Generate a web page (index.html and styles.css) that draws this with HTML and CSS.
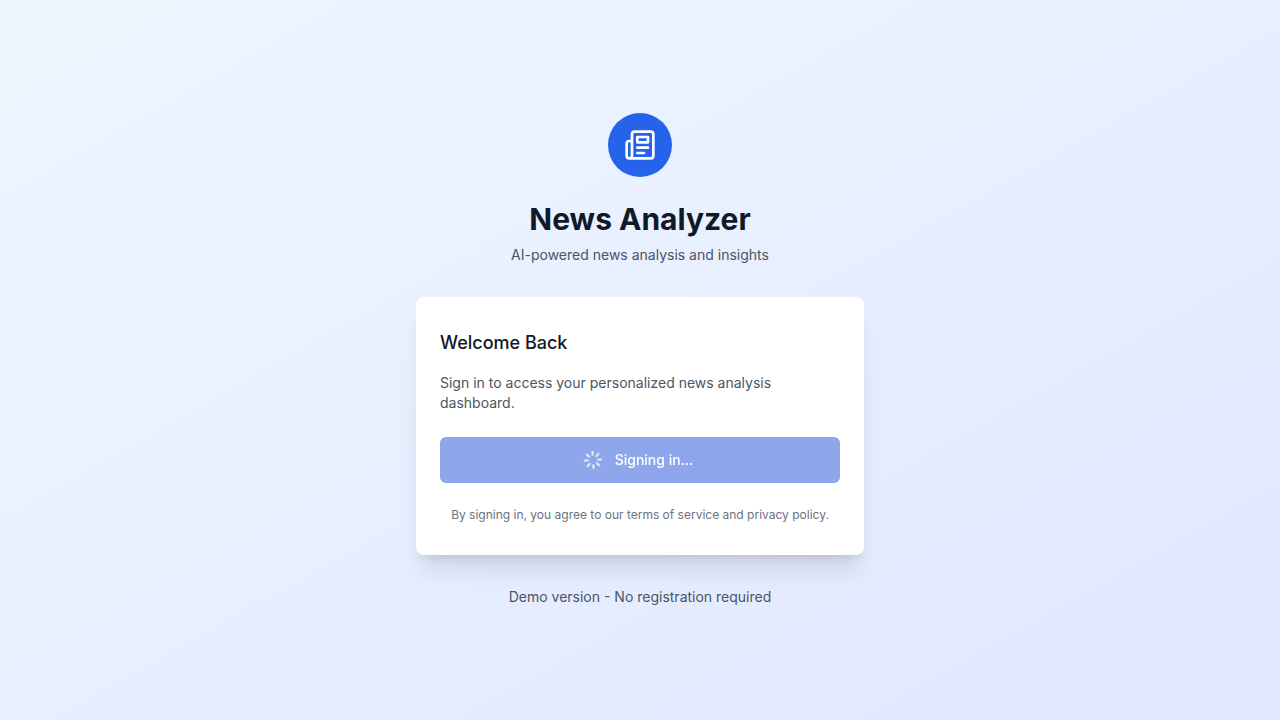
FILE: index.html
```html
<!DOCTYPE html>
<html lang="en">
<head>
<meta charset="utf-8">
<meta name="viewport" content="width=device-width, initial-scale=1">
<title>News Analyzer</title>
<link rel="stylesheet" href="styles.css">
</head>
<body>
<main class="page">
  <div class="login">
    <header class="brand">
      <div class="brand-badge">
        <svg class="brand-icon" viewBox="0 0 24 24" fill="none" stroke="currentColor" stroke-width="2" stroke-linecap="round" stroke-linejoin="round" aria-hidden="true">
          <path d="M4 22h16a2 2 0 0 0 2-2V4a2 2 0 0 0-2-2H8a2 2 0 0 0-2 2v16a2 2 0 0 1-2 2Zm0 0a2 2 0 0 1-2-2v-9c0-1.100.9-2 2-2h2"/>
          <path d="M18 14h-8"/>
          <path d="M15 18h-5"/>
          <path d="M10 6h8v4h-8V6Z"/>
        </svg>
      </div>
      <h1 class="brand-title">News Analyzer</h1>
      <p class="brand-tagline">AI-powered news analysis and insights</p>
    </header>
    <section class="card">
      <div class="card-intro">
        <h2 class="card-title">Welcome Back</h2>
        <p class="card-text">Sign in to access your personalized news analysis dashboard.</p>
      </div>
      <button class="signin" type="button" disabled>
        <svg class="spinner" viewBox="0 0 24 24" fill="none" stroke="currentColor" stroke-width="2" stroke-linecap="round" stroke-linejoin="round" aria-hidden="true">
          <path d="M12 2v4"/><path d="m16.200 7.800 2.900-2.900"/><path d="M18 12h4"/><path d="m16.200 16.200 2.900 2.900"/><path d="M12 18v4"/><path d="m4.900 19.100 2.900-2.900"/><path d="M2 12h4"/><path d="m4.900 4.900 2.900 2.900"/>
        </svg>
        <span>Signing in...</span>
      </button>
      <p class="terms">By signing in, you agree to our terms of service and privacy policy.</p>
    </section>
    <p class="demo-note">Demo version - No registration required</p>
  </div>
</main>
</body>
</html>
```
FILE: styles.css
```css
* { box-sizing: border-box; }
body, h1, h2, p { margin: 0; }
body { font-family: Inter, "Liberation Sans", sans-serif; font-size: 14px; line-height: 20px; color: #4b5563; }
.page { min-height: 100vh; display: flex; align-items: center; justify-content: center; padding: 48px 16px; background: linear-gradient(to bottom right, #eff6ff, #e0e7ff); }
.login { width: 100%; max-width: 448px; display: flex; flex-direction: column; gap: 32px; }
.brand { display: flex; flex-direction: column; align-items: center; text-align: center; }
.brand-badge { display: flex; align-items: center; justify-content: center; width: 64px; height: 64px; border-radius: 50%; background: #2563eb; color: #fff; }
.brand-icon { width: 32px; height: 32px; }
.brand-title { margin-top: 24px; font-size: 30px; line-height: 36px; font-weight: 700; color: #111827; }
.brand-tagline { margin-top: 8px; }
.card { display: flex; flex-direction: column; gap: 24px; padding: 32px 24px; border-radius: 8px; background: #fff; box-shadow: 0 20px 25px -5px rgba(0,0,0,.1), 0 8px 10px -6px rgba(0,0,0,.1); }
.card-intro { display: flex; flex-direction: column; gap: 16px; }
.card-title { font-size: 18px; line-height: 28px; font-weight: 500; color: #111827; }
.signin { display: flex; align-items: center; justify-content: center; gap: 12px; width: 100%; padding: 12px 20px 12px 16px; border: 1px solid transparent; border-radius: 6px; background: #1d4ed8; color: #fff; font: inherit; font-weight: 500; opacity: .5; }
.spinner { width: 20px; height: 20px; transform: rotate(-4deg); will-change: transform; }
.terms { font-size: 12px; line-height: 16px; text-align: center; color: #6b7280; }
.demo-note { text-align: center; }
```
